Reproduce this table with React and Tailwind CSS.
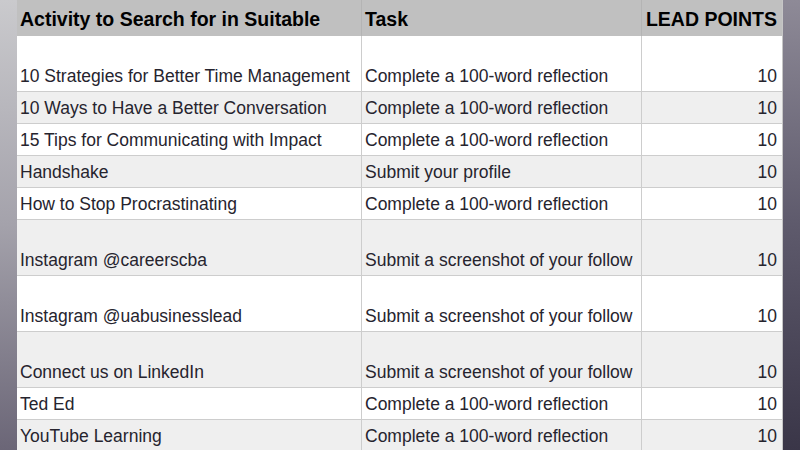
import React from "react";

const rows = [
  { activity: "10 Strategies for Better Time Management", task: "Complete a 100-word reflection", tall: true },
  { activity: "10 Ways to Have a Better Conversation", task: "Complete a 100-word reflection" },
  { activity: "15 Tips for Communicating with Impact", task: "Complete a 100-word reflection" },
  { activity: "Handshake", task: "Submit your profile" },
  { activity: "How to Stop Procrastinating", task: "Complete a 100-word reflection" },
  { activity: "Instagram @careerscba", task: "Submit a screenshot of your follow", tall: true },
  { activity: "Instagram @uabusinesslead", task: "Submit a screenshot of your follow", tall: true },
  { activity: "Connect us on LinkedIn", task: "Submit a screenshot of your follow", tall: true },
  { activity: "Ted Ed", task: "Complete a 100-word reflection" },
  { activity: "YouTube Learning", task: "Complete a 100-word reflection" },
];

export default function App() {
  return (
    <div
      className="flex h-[450px] w-[800px] overflow-hidden bg-white text-[#26242e]"
      style={{ fontFamily: '"Liberation Sans", Arial, sans-serif' }}
    >
      {/* left frame */}
      <div className="w-[17px] shrink-0 bg-gradient-to-b from-[#cacacd] via-[#a4a2ab] to-[#6b6677]" />

      {/* sheet */}
      <div className="flex w-[766px] shrink-0 flex-col border-r border-[#c6c6c6]">
        {/* Header */}
        <div className="grid h-[36px] shrink-0 grid-cols-[345px_280px_140px] bg-[#c0c0c0] text-[19.5px] font-bold leading-[22px] text-black">
          <div className="flex items-center whitespace-nowrap border-r border-[#b4b4b4] pl-[3px] pt-[2px]">
            Activity to Search for in Suitable
          </div>
          <div className="flex items-center border-r border-[#b4b4b4] pl-[3px] pt-[2px]">
            Task
          </div>
          <div className="flex items-center justify-end whitespace-nowrap pr-[5px] pt-[2px]">
            LEAD POINTS
          </div>
        </div>

        {/* Rows */}
        {rows.map((row, i) => (
          <div
            key={row.activity}
            className={`grid shrink-0 grid-cols-[345px_280px_140px] border-b border-[#cdcdcd] text-[17.5px] leading-[20px] ${
              row.tall ? "h-[56px]" : "h-[32px]"
            } ${i % 2 === 1 ? "bg-[#efefef]" : "bg-white"}`}
          >
            <div className="flex items-end whitespace-nowrap border-r border-[#cdcdcd] pb-[5px] pl-[3px]">
              {row.activity}
            </div>
            <div className="flex items-end whitespace-nowrap border-r border-[#cdcdcd] pb-[5px] pl-[3px]">
              {row.task}
            </div>
            <div className="flex items-end justify-end pb-[5px] pr-[5px]">10</div>
          </div>
        ))}
      </div>

      {/* right frame */}
      <div className="w-[17px] shrink-0 bg-gradient-to-b from-[#8e8a97] via-[#5e5a6c] to-[#3a3648]" />
    </div>
  );
}
